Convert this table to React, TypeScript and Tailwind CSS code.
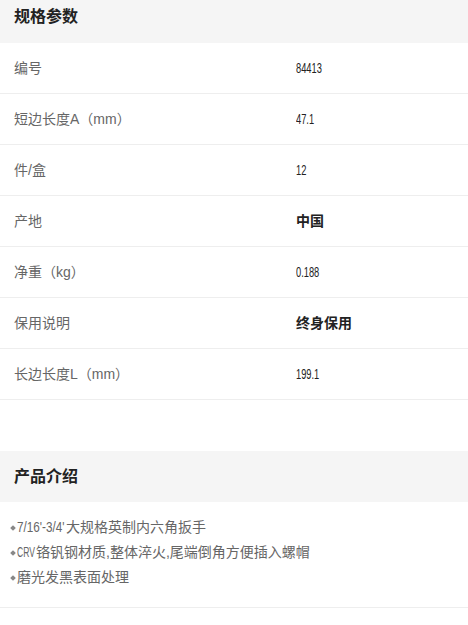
const SPECS: { label: string; value: string; strong?: boolean; num?: boolean }[] = [
  { label: "编号", value: "84413", num: true },
  { label: "短边长度A（mm）", value: "47.1", num: true },
  { label: "件/盒", value: "12", num: true },
  { label: "产地", value: "中国", strong: true },
  { label: "净重（kg）", value: "0.188", num: true },
  { label: "保用说明", value: "终身保用", strong: true },
  { label: "长边长度L（mm）", value: "199.1", num: true },
];

const font = {
  fontFamily: '"Liberation Sans", "Noto Sans CJK SC", sans-serif',
};

// narrow digits like the shop's DIN-ish font
const Narrow = ({ children }: { children: string }) => (
  <span className="inline-block origin-left scale-x-[0.62] text-[15px]">{children}</span>
);

const Bullet = ({ children }: { children: React.ReactNode }) => (
  <div className="flex items-center h-[25px]">
    <span className="w-[4px] h-[4px] bg-[#888] rotate-45 ml-[2px] mr-[2px]" />
    <span className="flex items-center">{children}</span>
  </div>
);

export default function App() {
  return (
    <div className="w-[468px] h-[625px] bg-white overflow-hidden" style={font}>
      {/* 规格参数 */}
      <div className="h-[43px] bg-[#f5f5f5] pl-[14px] pt-[4px]">
        <h2 className="text-[16px] leading-[26px] font-bold text-[#222]">规格参数</h2>
      </div>
      {SPECS.map((s) => (
        <div key={s.label} className="flex items-center h-[51px] border-b border-[#eeeeee] text-[14px]">
          <div className="w-[296px] pl-[14px] text-[#666]">{s.label}</div>
          <div className={s.strong ? "font-bold text-[#222]" : "text-[#222]"}>
            {s.num ? <Narrow>{s.value}</Narrow> : s.value}
          </div>
        </div>
      ))}

      <div className="h-[51px]" />

      {/* 产品介绍 */}
      <div className="h-[51px] bg-[#f5f5f5] pl-[14px] flex items-center">
        <h2 className="text-[16px] font-bold text-[#222]">产品介绍</h2>
      </div>
      <div className="pl-[9px] pt-[13px] pb-[17px] border-b border-[#eeeeee] text-[14px] text-[#666]">
        <Bullet>
          <span className="inline-block w-[49px] whitespace-nowrap">
            <span className="inline-block origin-left scale-x-[0.78] text-[15px]">7/16'-3/4'</span>
          </span>
          大规格英制内六角扳手
        </Bullet>
        <Bullet>
          <span className="inline-block w-[19px] whitespace-nowrap">
            <span className="inline-block origin-left scale-x-[0.57] text-[15px]">CRV</span>
          </span>
          铬钒钢材质,整体淬火,尾端倒角方便插入螺帽
        </Bullet>
        <Bullet>磨光发黑表面处理</Bullet>
      </div>
    </div>
  );
}
